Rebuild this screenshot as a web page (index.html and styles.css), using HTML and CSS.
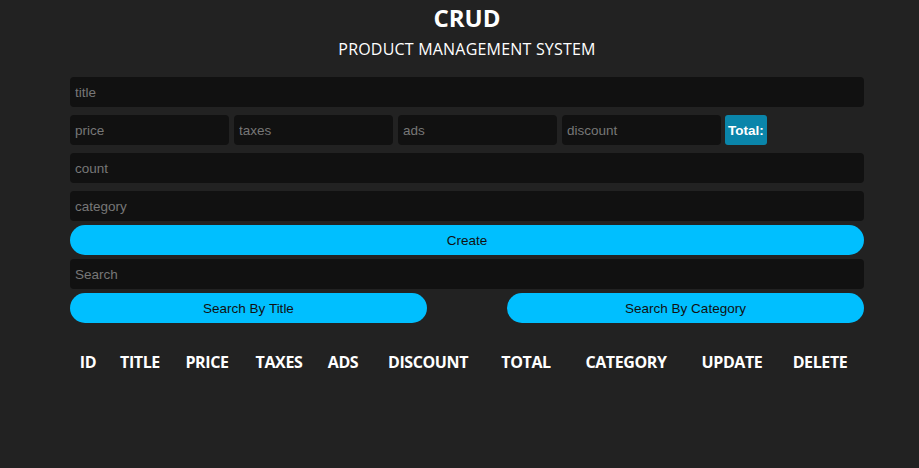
FILE: index.html
```html
<!DOCTYPE html>
<html>
<head>
<meta charset="utf-8">
<link rel="stylesheet" href="styles.css">
</head>
<body>
<div class="crud">
  <div class="head">
    <h2>CRUD</h2>
    <p>PRODUCT MANAGEMENT SYSTEM</p>
  </div>
  <div class="inputs">
    <input type="text" placeholder="title" class="full">
    <div class="price-row">
      <input type="text" placeholder="price" class="part">
      <input type="text" placeholder="taxes" class="part">
      <input type="text" placeholder="ads" class="part">
      <input type="text" placeholder="discount" class="part">
      <small class="total">Total:</small>
    </div>
    <input type="text" placeholder="count" class="full">
    <input type="text" placeholder="category" class="full">
    <button class="btn btn-create">Create</button>
  </div>
  <div class="output">
    <div class="search-block">
      <input type="text" placeholder="Search" class="full search">
      <div class="btn-search-row">
        <button class="btn btn-half">Search By Title</button>
        <button class="btn btn-half">Search By Category</button>
      </div>
    </div>
    <table>
      <tr>
        <th class="c-id">ID</th><th class="c-title">TITLE</th><th class="c-price">PRICE</th><th class="c-taxes">TAXES</th><th class="c-ads">ADS</th><th class="c-discount">DISCOUNT</th><th class="c-total">TOTAL</th><th class="c-category">CATEGORY</th><th class="c-update">UPDATE</th><th class="c-delete">DELETE</th>
      </tr>
    </table>
  </div>
</div>
</body>
</html>
```
FILE: styles.css
```css
* { box-sizing: border-box; }
body {
  margin: 0;
  background: #222222;
  color: #fff;
  font-family: "Open Sans", "Noto Sans", sans-serif;
}
.crud {
  width: 794px;
  margin-left: 70px;
}
.head {
  text-align: center;
}
.head h2 {
  margin: 0;
  padding-top: 1px;
  font-size: 24px;
  line-height: 33px;
  font-weight: 700;
}
.head p {
  margin: 0;
  font-size: 16px;
  line-height: 30px;
  letter-spacing: 0.2px;
}
.inputs {
  margin-top: 13px;
  display: flex;
  flex-direction: column;
  gap: 8px;
}
input {
  font-family: "Liberation Sans", Arial, sans-serif;
  font-size: 13.5px;
  color: #fff;
  background: #111111;
  border: none;
  outline: none;
  border-radius: 4px;
  height: 30px;
  padding: 0 5px;
}
input::placeholder { color: #777; }
.full { width: 100%; }
.price-row {
  display: flex;
  align-items: center;
  gap: 5px;
}
.part { width: 159px; }
.total {
  background: #0a85aa;
  height: 30px;
  padding: 0 3px;
  border-radius: 3px;
  display: flex;
  align-items: center;
  font-family: "Liberation Sans", Arial, sans-serif;
  font-weight: 700;
  font-size: 13.5px;
  margin-left: -1px;
}
.btn {
  font-family: "Liberation Sans", Arial, sans-serif;
  font-size: 13.5px;
  color: #111;
  background: #00bfff;
  border: none;
  border-radius: 16px;
  height: 30px;
  cursor: pointer;
}
.btn-create {
  width: 100%;
  margin-top: -4px;
}
.output {
  margin-top: 4px;
}
.search-block {
  display: flex;
  flex-direction: column;
  gap: 4px;
}
.btn-search-row {
  display: flex;
  justify-content: space-between;
}
.btn-half { width: 357px; }
table {
  width: 100%;
  margin-top: 23px;
  border-collapse: collapse;
  table-layout: fixed;
}
th {
  font-size: 16px;
  font-weight: 700;
  padding: 5px 0;
  letter-spacing: -0.4px;
  white-space: nowrap;
}
.c-id { width: 36px; }
.c-title { width: 68px; }
.c-price { width: 66px; }
.c-taxes { width: 78px; }
.c-ads { width: 50px; }
.c-discount { width: 120px; }
.c-total { width: 76px; }
.c-category { width: 124px; }
.c-update { width: 88px; }
.c-delete { width: 88px; }
```
